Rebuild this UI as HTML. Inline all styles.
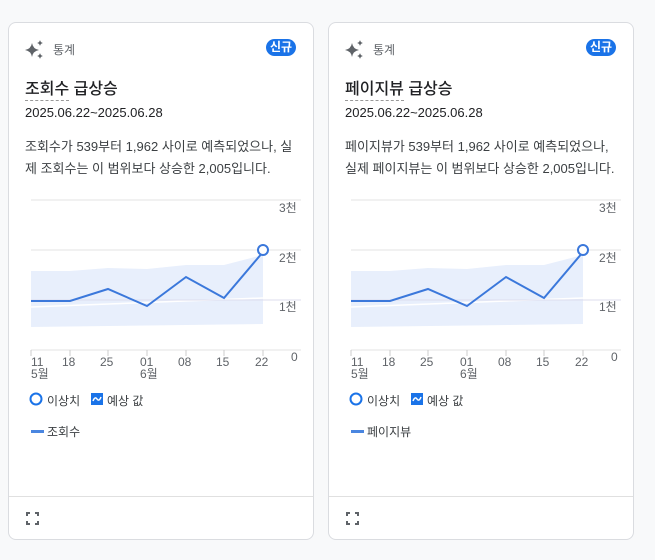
<!DOCTYPE html>
<html><head><meta charset="utf-8"><style>
body{margin:0;width:655px;height:560px;background:#f8f9fa;font-family:"Liberation Sans","Noto Sans CJK KR",sans-serif;position:relative;overflow:hidden;color:#202124}
.card{position:absolute;top:22px;width:306px;height:518px;background:#fff;border:1px solid #dadce0;border-radius:8px;box-sizing:border-box}
.a{position:absolute;white-space:nowrap}
.lbl{font-size:12px;color:#5f6368}
.badge{position:absolute;left:257px;top:16px;background:#1a73e8;color:#fff;font-size:12px;font-weight:bold;border-radius:9px;padding:1px 4px;line-height:15px}
.title{font-size:16px;font-weight:500;color:#202124;left:16px;top:52px}
.title u{text-decoration:none;border-bottom:1.5px dashed #999;padding-bottom:2px}
.date{font-size:13px;left:16px;top:82px;color:#202124}
.body{font-size:13px;left:16px;top:113px;line-height:22px;color:#3c4043}
.foot{position:absolute;left:0;right:0;top:473px;border-top:1px solid #e0e0e0}
</style></head><body>

<div class="card" style="left:8px">
 <svg class="a" style="left:15px;top:16px" width="22" height="22" viewBox="0 0 22 22"><path d="M8 4 Q9 10 15 11 Q9 12 8 18 Q7 12 1 11 Q7 10 8 4Z" fill="#5f6368"/><path d="M16 1 Q16.5 3.5 19 4 Q16.5 4.5 16 7 Q15.5 4.5 13 4 Q15.5 3.5 16 1Z" fill="#5f6368"/><path d="M16 14 Q16.5 16.5 19 17 Q16.5 17.5 16 20 Q15.5 17.5 13 17 Q15.5 16.5 16 14Z" fill="#5f6368"/></svg>
 <div class="a lbl" style="left:44px;top:18px">통계</div>
 <div class="badge">신규</div>
 <div class="a title"><u>조회수</u> 급상승</div>
 <div class="a date">2025.06.22~2025.06.28</div>
 <div class="a body">조회수가 539부터 1,962 사이로 예측되었으나, 실<br>제 조회수는 이 범위보다 상승한 2,005입니다.</div>
 <svg class="a" style="left:0;top:170px" width="304" height="250">
  <g stroke="#e3e3e3" stroke-width="1"><line x1="22" y1="7" x2="292" y2="7"/><line x1="22" y1="57" x2="292" y2="57"/><line x1="22" y1="157" x2="292" y2="157"/></g>
  <polygon points="22,78 61,78 99,75 138,76 177,72 215,72 254,62 254,131 22,134" fill="#e8effc"/>
  <line x1="22" y1="114" x2="254" y2="105" stroke="#fff" stroke-width="1.5"/>
  <line x1="22" y1="107" x2="292" y2="107" stroke="#dde" stroke-width="1"/>
  <polyline points="22,108 61,108 99,96 138,113 177,84 215,105 254,59" fill="none" stroke="#3b78db" stroke-width="2"/>
  <circle cx="254" cy="57" r="5" fill="#fff" stroke="#3b78db" stroke-width="2"/>
  <g fill="#5f6368" font-size="12" font-family="Liberation Sans,Noto Sans CJK KR,sans-serif">
   <text x="270" y="19">3천</text><text x="270" y="69">2천</text><text x="270" y="118">1천</text><text x="282" y="168">0</text>
   <text x="22" y="173">11</text><text x="22" y="185">5월</text><text x="53" y="173">18</text><text x="91" y="173">25</text><text x="131" y="173">01</text><text x="131" y="185">6월</text><text x="169" y="173">08</text><text x="207" y="173">15</text><text x="246" y="173">22</text>
  </g>
  <g stroke="#ccc"><line x1="22" y1="157" x2="22" y2="163"/><line x1="61" y1="157" x2="61" y2="163"/><line x1="99" y1="157" x2="99" y2="163"/><line x1="138" y1="157" x2="138" y2="163"/><line x1="177" y1="157" x2="177" y2="163"/><line x1="215" y1="157" x2="215" y2="163"/><line x1="254" y1="157" x2="254" y2="163"/></g>
 </svg>
 <svg class="a" style="left:20px;top:369px" width="14" height="14"><circle cx="7" cy="7" r="5.5" fill="none" stroke="#1a73e8" stroke-width="2"/></svg>
 <div class="a lbl" style="left:38px;top:369px;color:#3c4043">이상치</div>
 <svg class="a" style="left:82px;top:370px" width="12" height="12"><rect width="12" height="12" fill="#1a73e8"/><path d="M2 8 Q4 3 6 6 Q8 9 10 4" stroke="#fff" stroke-width="1.5" fill="none"/></svg>
 <div class="a lbl" style="left:98px;top:369px;color:#3c4043">예상 값</div>
 <div class="a" style="left:22px;top:407px;width:13px;height:3px;background:#4a86e0"></div>
 <div class="a lbl" style="left:38px;top:400px;color:#3c4043">조회수</div>
 <div class="foot"></div>
 <svg class="a" style="left:17px;top:489px" width="13" height="13" viewBox="0 0 13 13" fill="none" stroke="#5f6368" stroke-width="2"><path d="M1 4V1H4M9 1H12V4M12 9V12H9M4 12H1V9"/></svg>
</div>

<div class="card" style="left:328px">
 <svg class="a" style="left:15px;top:16px" width="22" height="22" viewBox="0 0 22 22"><path d="M8 4 Q9 10 15 11 Q9 12 8 18 Q7 12 1 11 Q7 10 8 4Z" fill="#5f6368"/><path d="M16 1 Q16.5 3.5 19 4 Q16.5 4.5 16 7 Q15.5 4.5 13 4 Q15.5 3.5 16 1Z" fill="#5f6368"/><path d="M16 14 Q16.5 16.5 19 17 Q16.5 17.5 16 20 Q15.5 17.5 13 17 Q15.5 16.5 16 14Z" fill="#5f6368"/></svg>
 <div class="a lbl" style="left:44px;top:18px">통계</div>
 <div class="badge">신규</div>
 <div class="a title"><u>페이지뷰</u> 급상승</div>
 <div class="a date">2025.06.22~2025.06.28</div>
 <div class="a body">페이지뷰가 539부터 1,962 사이로 예측되었으나,<br>실제 페이지뷰는 이 범위보다 상승한 2,005입니다.</div>
 <svg class="a" style="left:0;top:170px" width="304" height="250">
  <g stroke="#e3e3e3" stroke-width="1"><line x1="22" y1="7" x2="292" y2="7"/><line x1="22" y1="57" x2="292" y2="57"/><line x1="22" y1="157" x2="292" y2="157"/></g>
  <polygon points="22,78 61,78 99,75 138,76 177,72 215,72 254,62 254,131 22,134" fill="#e8effc"/>
  <line x1="22" y1="114" x2="254" y2="105" stroke="#fff" stroke-width="1.5"/>
  <line x1="22" y1="107" x2="292" y2="107" stroke="#dde" stroke-width="1"/>
  <polyline points="22,108 61,108 99,96 138,113 177,84 215,105 254,59" fill="none" stroke="#3b78db" stroke-width="2"/>
  <circle cx="254" cy="57" r="5" fill="#fff" stroke="#3b78db" stroke-width="2"/>
  <g fill="#5f6368" font-size="12" font-family="Liberation Sans,Noto Sans CJK KR,sans-serif">
   <text x="270" y="19">3천</text><text x="270" y="69">2천</text><text x="270" y="118">1천</text><text x="282" y="168">0</text>
   <text x="22" y="173">11</text><text x="22" y="185">5월</text><text x="53" y="173">18</text><text x="91" y="173">25</text><text x="131" y="173">01</text><text x="131" y="185">6월</text><text x="169" y="173">08</text><text x="207" y="173">15</text><text x="246" y="173">22</text>
  </g>
  <g stroke="#ccc"><line x1="22" y1="157" x2="22" y2="163"/><line x1="61" y1="157" x2="61" y2="163"/><line x1="99" y1="157" x2="99" y2="163"/><line x1="138" y1="157" x2="138" y2="163"/><line x1="177" y1="157" x2="177" y2="163"/><line x1="215" y1="157" x2="215" y2="163"/><line x1="254" y1="157" x2="254" y2="163"/></g>
 </svg>
 <svg class="a" style="left:20px;top:369px" width="14" height="14"><circle cx="7" cy="7" r="5.5" fill="none" stroke="#1a73e8" stroke-width="2"/></svg>
 <div class="a lbl" style="left:38px;top:369px;color:#3c4043">이상치</div>
 <svg class="a" style="left:82px;top:370px" width="12" height="12"><rect width="12" height="12" fill="#1a73e8"/><path d="M2 8 Q4 3 6 6 Q8 9 10 4" stroke="#fff" stroke-width="1.5" fill="none"/></svg>
 <div class="a lbl" style="left:98px;top:369px;color:#3c4043">예상 값</div>
 <div class="a" style="left:22px;top:407px;width:13px;height:3px;background:#4a86e0"></div>
 <div class="a lbl" style="left:38px;top:400px;color:#3c4043">페이지뷰</div>
 <div class="foot"></div>
 <svg class="a" style="left:17px;top:489px" width="13" height="13" viewBox="0 0 13 13" fill="none" stroke="#5f6368" stroke-width="2"><path d="M1 4V1H4M9 1H12V4M12 9V12H9M4 12H1V9"/></svg>
</div>

</body></html>
